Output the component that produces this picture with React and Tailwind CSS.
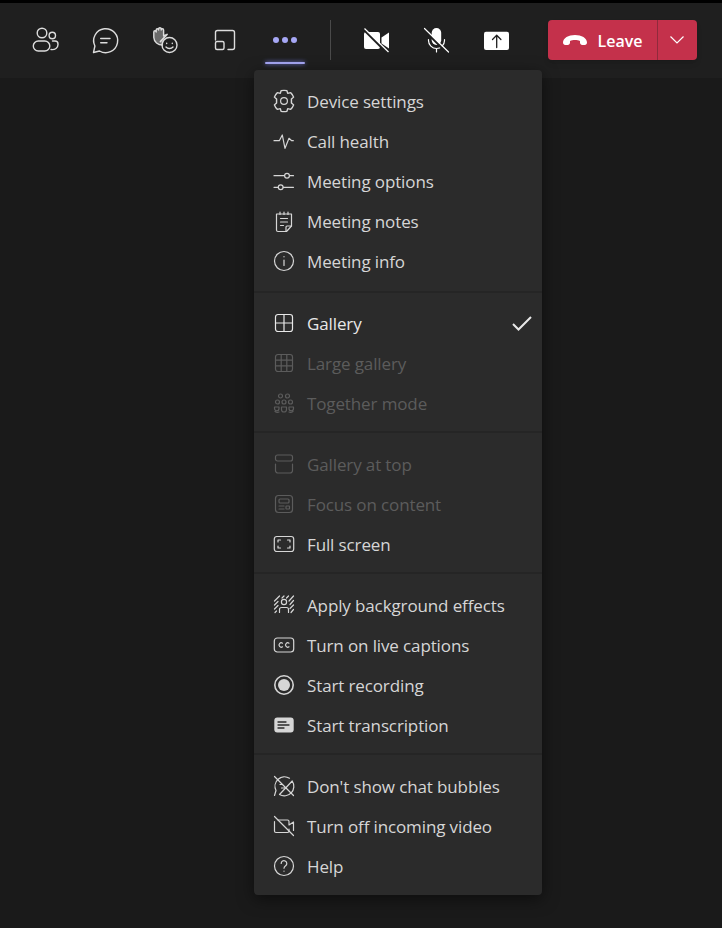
import React from 'react';

const Svg = ({ size = 24, width = 1.2, className = '', children }) => (
  <svg width={size} height={size} viewBox={`0 0 ${size} ${size}`} fill="none" stroke="currentColor" strokeWidth={width} strokeLinecap="round" strokeLinejoin="round" className={`shrink-0 ${className}`}>
    {children}
  </svg>
);

const Roster = () => (
  <Svg size={30} width={1.4}>
    <circle cx="12" cy="8" r="4.800" />
    <circle cx="22.300" cy="10.500" r="3.200" />
    <rect x="3.300" y="16" width="16.500" height="10" rx="5" />
    <path d="M22.500 16h2.500a3 3 0 0 1 3 3v.5c0 3.500-3 5.500-7 5" />
  </Svg>
);

const Chat = () => (
  <Svg size={30} width={1.4}>
    <path d="M3.500 27.500l1.400-6.500A12 12 0 1 1 9.500 26z" />
    <path d="M10.700 13.500H20M10.700 17.700H17" />
  </Svg>
);

const Hand = () => (
  <Svg size={30} width={1.4}>
    <path d="M12.500 20c-4.500 0-8.500-3-8.700-7.500V7a1.200 1.200 0 0 1 2.400 0V5a1.200 1.200 0 0 1 2.400 0V4a1.300 1.300 0 0 1 2.600 0v1a1.200 1.200 0 0 1 2.400 0v6l2-1" fill="currentColor" fillOpacity="0.4" />
    <path d="M17 9.500l-6.500 7" strokeWidth="1.800" />
    <circle cx="19.500" cy="20" r="7.500" />
    <path d="M16 22c1.800 2 5.200 2 7 0M16.700 18.300v.3M22.300 18.300v.3" />
  </Svg>
);

const ShareTray = () => (
  <Svg size={30} width={1.4}>
    <path d="M5.500 15V7.500a2 2 0 0 1 2-2h15a2 2 0 0 1 2 2v15a2 2 0 0 1-2 2H18" />
    <rect x="5.500" y="16.500" width="8.500" height="8" rx="1.500" />
  </Svg>
);

const VideoOff = () => (
  <svg width="30" height="30" viewBox="0 0 30 30" fill="white" stroke="none">
    <path d="M3 9a2 2 0 0 1 2-2h12a2 2 0 0 1 2 2v13a2 2 0 0 1-2 2H5a2 2 0 0 1-2-2z" />
    <path d="M20.500 12.500l7.500-5v16l-7.500-5z" />
    <path d="M3 5l24 24" stroke="#1f1f1f" strokeWidth="2.200" />
    <path d="M3.500 3.500l24 23.500" stroke="white" strokeWidth="1.200" />
  </svg>
);

const MicOff = () => (
  <svg width="30" height="30" viewBox="0 0 30 30" fill="none" stroke="white" strokeWidth="1.200" strokeLinecap="round">
    <rect x="10.700" y="3" width="9.500" height="17" rx="4.700" fill="white" stroke="none" />
    <path d="M7.500 14.500v1a8 8 0 0 0 16 0v-1M15.500 23.500v3.500" />
    <path d="M3 5l24 24" stroke="#1f1f1f" strokeWidth="2.200" />
    <path d="M3.500 3.500l24 23.500" />
  </svg>
);

const ShareUp = () => (
  <svg width="30" height="30" viewBox="0 0 30 30" fill="none">
    <rect x="3" y="6.700" width="25" height="18.300" rx="2" fill="white" />
    <path d="M15.700 22.500V10.500M11.500 14.500l4.200-4.200 4.200 4.200" stroke="#1f1f1f" strokeWidth="1.300" strokeLinecap="round" strokeLinejoin="round" />
  </svg>
);

const Phone = () => (
  <svg width="26" height="14" viewBox="0 0 26 14" fill="white">
    <path d="M1 9.500C1 5 6.500 2 13 2s12 3 12 7.500c0 1.500-1 2.500-2.200 2.500h-2.600c-1.200 0-2.200-1-2.200-2.200V8c-1.500-.8-3-1-5-1s-3.500.2-5 1v1.800C8 11 7 12 5.800 12H3.200C2 12 1 11 1 9.500z" />
  </svg>
);

const icons = {
  settings: (
    <>
      <circle cx="12" cy="12" r="3.400" />
      <path transform="translate(12 12) scale(1.200 1.080) translate(-12 -12)" d="M9.600 2.400a10 10 0 0 1 4.800 0l.7 2.500 2.500-.6a10 10 0 0 1 2.400 4.100L18.200 10.200v3.600l1.800 1.800a10 10 0 0 1-2.400 4.100l-2.500-.6-.7 2.500a10 10 0 0 1-4.800 0l-.7-2.500-2.500.6A10 10 0 0 1 4 15.600l1.800-1.800v-3.600L4 8.400a10 10 0 0 1 2.400-4.100l2.500.6z" />
    </>
  ),
  health: <path d="M2 11.700H7.300L10.300 6 13 19.300 17 9.300l2.700 2.400h1.600" />,
  options: (
    <>
      <path d="M2 6.700H12.500M17.500 6.700h4M2 18.300H6.200M11.200 18.300H21.500" />
      <circle cx="15" cy="6.700" r="2.400" />
      <circle cx="8.700" cy="18.300" r="2.400" />
    </>
  ),
  notes: (
    <>
      <path d="M4.500 5h15v12l-5 5.500H6A1.500 1.500 0 0 1 4.500 21z" />
      <path d="M8 3v2.500M12 3v2.500M16 3v2.500M8.500 9.500h7M8.500 13h7M8.500 16.500h3M19.500 17H15a1 1 0 0 0-1 1v4.500" />
    </>
  ),
  info: (
    <>
      <circle cx="12" cy="12" r="9.500" />
      <path d="M12 11v5.500M12 7.500v.3" />
    </>
  ),
  gallery: (
    <>
      <rect x="3.500" y="3.500" width="17" height="17" rx="2.500" />
      <path d="M12 3.500v17M3.500 12h17" />
    </>
  ),
  large: (
    <>
      <rect x="3.500" y="3.500" width="17" height="17" rx="2.500" />
      <path d="M9.200 3.500v17M14.800 3.500v17M3.500 9.200h17M3.500 14.800h17" />
    </>
  ),
  together: (
    <>
      <circle cx="8.500" cy="5" r="2" />
      <circle cx="15.500" cy="5" r="2" />
      <circle cx="5.500" cy="11" r="2" />
      <circle cx="12" cy="11" r="2" />
      <circle cx="18.500" cy="11" r="2" />
      <path d="M2.500 16h4.500v1.500a2.200 2.200 0 0 1-4.500 0zM9.500 16h5v2.500a2.500 2.500 0 0 1-5 0zM17 16h4.500v1.500a2.200 2.200 0 0 1-4.500 0z" />
      <path d="M3 20.500c1.500 1 3 1 4 .5M17 21c1 .5 2.500.5 4-.5" />
    </>
  ),
  top: (
    <>
      <rect x="3.500" y="3" width="17" height="6" rx="2" />
      <path d="M3.500 12v6.500a2.500 2.500 0 0 0 2.500 2.500h12a2.500 2.500 0 0 0 2.500-2.500V12" />
    </>
  ),
  focus: (
    <>
      <rect x="3.500" y="3.500" width="17" height="17" rx="3" />
      <rect x="7" y="7" width="10" height="4" rx="1" />
      <path d="M7 14h5M7 17h5" />
      <rect x="14" y="14" width="3.500" height="3" rx=".5" />
    </>
  ),
  fullscreen: (
    <>
      <rect x="2.300" y="4.500" width="19.400" height="15" rx="2.500" />
      <path d="M6 10V8h2.500M15.500 8H18v2M18 14v2h-2.500M8.500 16H6v-2" />
    </>
  ),
  background: (
    <>
      <path d="M2.500 8L7.500 3M2.500 12L6 8.500M2.500 16l3.500-3.500M3 19.500l1.500-1.500M12 3l-2 2M21.500 3l-4.500 5M16.500 3l-2 2M21.500 7.500L18 11.500M21.500 12L18 15.500M21.500 16.500l-2.500 3" />
      <circle cx="12" cy="9" r="2.600" />
      <path d="M7.500 19.500v-3a2 2 0 0 1 2-2h5a2 2 0 0 1 2 2v3" />
    </>
  ),
  captions: (
    <>
      <rect x="2.300" y="5" width="19.400" height="14" rx="3" />
      <path d="M10.500 10.200a2.200 2.200 0 1 0 0 3.600M17 10.200a2.200 2.200 0 1 0 0 3.600" />
    </>
  ),
  recording: (
    <>
      <circle cx="12" cy="12" r="9.200" strokeWidth="1.600" />
      <circle cx="12" cy="12" r="6" fill="currentColor" stroke="none" />
    </>
  ),
  transcription: (
    <>
      <rect x="2.300" y="4.500" width="19.400" height="15" rx="3" fill="currentColor" stroke="none" />
      <path d="M6 9h8M6 12h11M6 15h6" stroke="#2b2b2b" strokeWidth="1.300" />
    </>
  ),
  bubbles: (
    <>
      <path d="M2.500 21.500l1.500-5A9.500 9.500 0 0 1 17.500 4.200M20.200 7A9.500 9.500 0 0 1 7.500 20.500z" />
      <path d="M2.500 2.500l19 19M8 10.500h2.500M9.500 14H13" />
    </>
  ),
  incoming: (
    <>
      <path d="M6 6h9.500a1.500 1.500 0 0 1 1.500 1.500V11l4.500-3v8.500M17 15v2a1.500 1.500 0 0 1-1.500 1.500H4A1.500 1.500 0 0 1 2.500 17V7.500" />
      <path d="M2.500 2.500l19 19" />
    </>
  ),
  help: (
    <>
      <circle cx="12" cy="12" r="9.500" />
      <path d="M9.200 9.500a2.800 2.800 0 1 1 4.500 2.200c-1 .8-1.700 1.300-1.700 2.500M12 17v.2" />
    </>
  ),
};

const sections = [
  {
    spacing: '',
    rows: [
      ['settings', 'Device settings'],
      ['health', 'Call health'],
      ['options', 'Meeting options'],
      ['notes', 'Meeting notes'],
      ['info', 'Meeting info'],
    ],
  },
  {
    spacing: 'mt-[10px] pt-[10px]',
    rows: [
      ['gallery', 'Gallery', 'checked'],
      ['large', 'Large gallery', 'disabled'],
      ['together', 'Together mode', 'disabled'],
    ],
  },
  {
    spacing: 'mt-[8px] pt-[11px]',
    rows: [
      ['top', 'Gallery at top', 'disabled'],
      ['focus', 'Focus on content', 'disabled'],
      ['fullscreen', 'Full screen'],
    ],
  },
  {
    spacing: 'mt-[8px] pt-[11px]',
    rows: [
      ['background', 'Apply background effects'],
      ['captions', 'Turn on live captions'],
      ['recording', 'Start recording'],
      ['transcription', 'Start transcription'],
    ],
  },
  {
    spacing: 'mt-[8px] pt-[11px]',
    rows: [
      ['bubbles', "Don't show chat bubbles"],
      ['incoming', 'Turn off incoming video'],
      ['help', 'Help'],
    ],
  },
];

const MenuRow = ({ icon, label, state }) => {
  const color = state === 'disabled' ? 'text-[#5c5c5c]' : state === 'checked' ? 'text-[#e8e8e8]' : 'text-[#d6d6d6]';
  return (
    <div className={`flex h-10 items-center pl-[18px] pr-2 ${color}`}>
      <Svg size={24}>{icons[icon]}</Svg>
      <span className="ml-[11px] mt-[1px] flex-1 text-[17px] tracking-[-0.125px]">{label}</span>
      {state === 'checked' && (
        <svg width="24" height="24" viewBox="0 0 24 24" fill="none" stroke="currentColor" strokeWidth="2">
          <path d="M3 13l5.500 5.500L21 6" />
        </svg>
      )}
    </div>
  );
};

const ToolButton = ({ children, active }) => (
  <div className="relative flex h-10 w-[60px] items-center justify-center text-[#dcdcdc]">
    {children}
    {active && <div className="absolute bottom-[-4px] left-[10px] h-[2px] w-10 rounded-full bg-[#a6a7f5] shadow-[0_0_4px_#7f85f5]" />}
  </div>
);

export default function App() {
  return (
    <div className="relative h-[928px] w-[722px] overflow-hidden bg-[#1a1a1a] font-['Open_Sans','Noto_Sans',sans-serif]">
      <div className="h-[3px] bg-black" />
      <div className="flex h-[75px] items-start bg-[#1f1f1f] pl-[15px] pt-[17px]">
        <ToolButton><Roster /></ToolButton>
        <ToolButton><Chat /></ToolButton>
        <ToolButton><Hand /></ToolButton>
        <ToolButton><ShareTray /></ToolButton>
        <ToolButton active>
          <div className="flex gap-[3px]">
            <span className="size-[6px] rounded-full bg-[#a6a7f5]" />
            <span className="size-[6px] rounded-full bg-[#a6a7f5]" />
            <span className="size-[6px] rounded-full bg-[#a6a7f5]" />
          </div>
        </ToolButton>
        <div className="ml-[15px] mr-[15px] h-10 w-px bg-[#4a4a4a]" />
        <ToolButton><VideoOff /></ToolButton>
        <ToolButton><MicOff /></ToolButton>
        <ToolButton><ShareUp /></ToolButton>
        <div className="ml-[22px] flex h-10 w-[149px] rounded-[4px] bg-[#c4314b] text-white shadow-md">
          <div className="flex w-[109px] items-center justify-center gap-[10px] pr-[1px]">
            <Phone />
            <span className="mt-[2px] text-[16px] font-semibold">Leave</span>
          </div>
          <div className="w-px bg-[#8f2a3c]" />
          <div className="flex flex-1 items-center justify-center pr-[2px]">
            <svg width="16" height="10" viewBox="0 0 16 10" fill="none" stroke="white" strokeWidth="1.200">
              <path d="M1.500 1.500l6.500 6.500 6.500-6.500" />
            </svg>
          </div>
        </div>
      </div>

      <div className="absolute left-[254px] top-[70px] w-[288px] rounded-[4px] bg-[#2b2b2b] pb-[9px] pt-[11px] shadow-[0_4px_16px_rgba(0,0,0,0.5)]">
        {sections.map((section, i) => (
          <div key={i} className={i > 0 ? `border-t-2 border-[#252525] ${section.spacing}` : ''}>
            {section.rows.map(([icon, label, state]) => (
              <MenuRow key={label} icon={icon} label={label} state={state} />
            ))}
          </div>
        ))}
      </div>
    </div>
  );
}
